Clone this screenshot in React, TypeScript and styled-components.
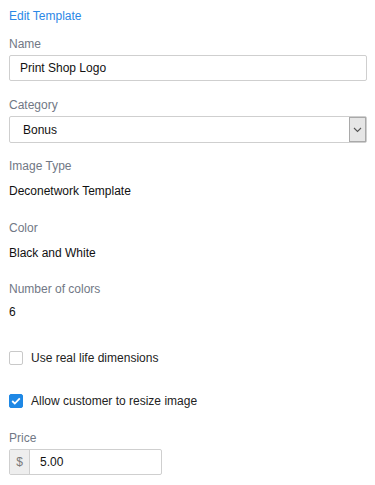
import React from "react";
import styled, { createGlobalStyle } from "styled-components";

const GlobalStyle = createGlobalStyle`
  body {
    margin: 0;
    background: #fff;
    font-family: "Liberation Sans", Arial, sans-serif;
    font-size: 12px;
    color: #111;
  }
`;

const Panel = styled.div`
  width: 358px;
  padding: 9px 8px 10px 9px;
  line-height: 14px;
`;

const Title = styled.div`
  color: #2b88e6;
  margin-bottom: 14px;
`;

const Field = styled.div<{ $space?: number }>`
  margin-bottom: ${(p) => p.$space ?? 17}px;
`;

const Label = styled.div<{ $gap?: number }>`
  color: #717885;
  margin-bottom: ${(p) => p.$gap ?? 4}px;
`;

const Value = styled.div`
  color: #111;
`;

const TextInput = styled.input`
  display: block;
  box-sizing: border-box;
  width: 100%;
  height: 26px;
  padding: 0 10px;
  border: 1px solid #cfcfcf;
  border-radius: 2px;
  font: inherit;
  color: #111;
  outline: none;
`;

const SelectBox = styled.div`
  display: flex;
  box-sizing: border-box;
  width: 100%;
  height: 27px;
  border: 1px solid #cfcfcf;
  border-radius: 2px;
`;

const SelectText = styled.div`
  flex: 1;
  display: flex;
  align-items: center;
  padding-left: 13px;
`;

const SelectArrow = styled.div`
  display: flex;
  align-items: center;
  justify-content: center;
  width: 17px;
  box-sizing: border-box;
  background: #e6e6e6;
  border: 1px solid #a9a9a9;
`;

const CheckRow = styled.label<{ $space: number }>`
  display: flex;
  align-items: center;
  gap: 8px;
  margin-bottom: ${(p) => p.$space}px;
  color: #222;
`;

const Box = styled.span<{ $checked?: boolean }>`
  display: flex;
  align-items: center;
  justify-content: center;
  box-sizing: border-box;
  width: 14px;
  height: 14px;
  border-radius: 2px;
  border: 1px solid ${(p) => (p.$checked ? "#1e88e5" : "#c9c9c9")};
  background: ${(p) => (p.$checked ? "#1e88e5" : "#fff")};
`;

const PriceGroup = styled.div`
  display: flex;
  width: 153px;
  height: 26px;
  box-sizing: border-box;
  border: 1px solid #cfcfcf;
  border-radius: 2px;
`;

const Addon = styled.div`
  width: 19px;
  display: flex;
  align-items: center;
  justify-content: center;
  background: #eeeeee;
  border-right: 1px solid #cfcfcf;
  color: #7a7a7a;
`;

const PriceInput = styled.input`
  flex: 1;
  min-width: 0;
  border: none;
  padding: 0 10px;
  font: inherit;
  color: #111;
  outline: none;
  background: transparent;
`;

const Chevron = () => (
  <svg width="9" height="6" viewBox="0 0 9 6">
    <path d="M1 1 L4.5 4.5 L8 1" fill="none" stroke="#555" strokeWidth="1.1" />
  </svg>
);

const Tick = () => (
  <svg width="10" height="8" viewBox="0 0 10 8">
    <path d="M1.2 4 L3.8 6.5 L8.8 1.3" fill="none" stroke="#fff" strokeWidth="1.8" />
  </svg>
);

export default function App() {
  return (
    <>
      <GlobalStyle />
      <Panel>
        <Title>Edit Template</Title>

        <Field $space={17}>
          <Label>Name</Label>
          <TextInput defaultValue="Print Shop Logo" />
        </Field>

        <Field $space={16}>
          <Label>Category</Label>
          <SelectBox>
            <SelectText>Bonus</SelectText>
            <SelectArrow>
              <Chevron />
            </SelectArrow>
          </SelectBox>
        </Field>

        <Field $space={23}>
          <Label $gap={11}>Image Type</Label>
          <Value>Deconetwork Template</Value>
        </Field>

        <Field $space={22}>
          <Label $gap={11}>Color</Label>
          <Value>Black and White</Value>
        </Field>

        <Field $space={32}>
          <Label $gap={9}>Number of colors</Label>
          <Value>6</Value>
        </Field>

        <CheckRow $space={29}>
          <Box />
          Use real life dimensions
        </CheckRow>

        <CheckRow $space={23}>
          <Box $checked>
            <Tick />
          </Box>
          Allow customer to resize image
        </CheckRow>

        <Field $space={0}>
          <Label>Price</Label>
          <PriceGroup>
            <Addon>$</Addon>
            <PriceInput defaultValue="5.00" />
          </PriceGroup>
        </Field>
      </Panel>
    </>
  );
}
